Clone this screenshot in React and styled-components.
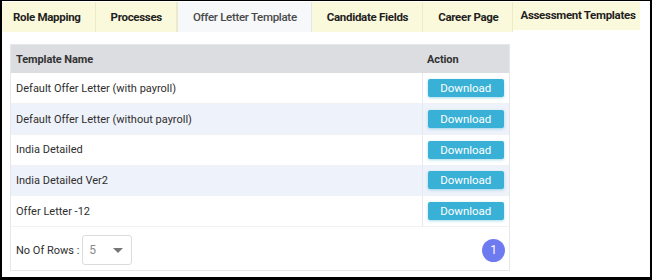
import React from 'react'
import styled, { createGlobalStyle } from 'styled-components'

const Global = createGlobalStyle`
  html, body { margin: 0; padding: 0; background: #fff; }
  body { font-family: Roboto, "Liberation Sans", sans-serif; }
  * { box-sizing: border-box; }
`

const tabs = ['Role Mapping', 'Processes', 'Offer Letter Template', 'Candidate Fields', 'Career Page', 'Assessment Templates']

const templates = [
  'Default Offer Letter (with payroll)',
  'Default Offer Letter (without payroll)',
  'India Detailed',
  'India Detailed Ver2',
  'Offer Letter -12',
]

const App = () => {
  return (
    <Frame>
      <Global />
      <TabBar>
        {tabs.map((t, i) => (
          <Tab key={t} active={i === 2} first={i === 0} last={i === tabs.length - 1}>{t}</Tab>
        ))}
      </TabBar>
      <Content>
        <Panel>
          <Table>
            <thead>
              <tr>
                <Th>Template Name</Th>
                <Th action>Action</Th>
              </tr>
            </thead>
            <tbody>
              {templates.map((name, i) => (
                <Row key={name} striped={i % 2 === 1}>
                  <Td>{name}</Td>
                  <Td action>
                    <DownloadButton>Download</DownloadButton>
                  </Td>
                </Row>
              ))}
            </tbody>
          </Table>
          <Footer>
            <RowsPicker>
              <span>No Of Rows :</span>
              <Select>
                <span>5</span>
                <Caret />
              </Select>
            </RowsPicker>
            <PageDot>1</PageDot>
          </Footer>
        </Panel>
      </Content>
    </Frame>
  )
}

export default App

const Frame = styled.div`
  width: 652px;
  height: 280px;
  border-style: solid;
  border-color: #000;
  border-width: 1px 2px 3px 2px;
  display: flex;
  flex-direction: column;
  overflow: hidden;
`

const TabBar = styled.div`
  display: flex;
  height: 31px;
  margin-top: 1px;
`

const Tab = styled.div`
  height: ${p => (p.last ? '28px' : '30px')};
  padding: ${p => (p.last ? '6px 0 0 7px' : p.first ? '0 14px 0 11px' : '0 14px 0 15px')};
  display: flex;
  align-items: ${p => (p.last ? 'flex-start' : 'center')};
  font-size: 11.5px;
  letter-spacing: -0.3px;
  font-weight: ${p => (p.active ? 500 : 700)};
  color: ${p => (p.active ? '#4a4a4a' : '#1f1f1f')};
  background: ${p => (p.active ? '#f6f8fa' : '#fbf9db')};
  border-right: ${p => (p.last ? 'none' : '1px solid')};
  border-left: ${p => (p.active ? '1px solid #e9ebd6' : 'none')};
  border-right-color: ${p => (p.active ? '#e4e6e8' : '#ecebc4')};
  white-space: nowrap;
  flex: ${p => (p.last ? '1' : 'none')};
  margin-right: ${p => (p.last ? '10px' : '0')};
`

const Content = styled.div`
  padding: 11px 0 0 8px;
`

const Panel = styled.div`
  width: 500px;
  border: 1px solid #e6e7ea;
  background: #fff;
`

const Table = styled.table`
  width: 100%;
  border-collapse: collapse;
  font-size: 11px;
  color: #2e2e2e;
`

const Th = styled.th`
  height: 28px;
  background: #dcdde1;
  text-align: left;
  font-weight: 700;
  padding: 0 5px;
  color: #333;
  letter-spacing: -0.1px;
  width: ${p => (p.action ? '87px' : 'auto')};
`

const Row = styled.tr`
  background: ${p => (p.striped ? '#eef2fa' : '#fff')};
`

const Td = styled.td`
  height: 30.7px;
  padding: 0 5px;
  text-align: ${p => (p.action ? 'center' : 'left')};
  border-left: ${p => (p.action ? '1px solid #e7e9ee' : 'none')};
  border-bottom: 1px solid #f0f1f4;
`

const DownloadButton = styled.button`
  width: 76px;
  height: 18px;
  border: none;
  border-radius: 2px;
  background: #39b0d5;
  color: #fff;
  font-family: Roboto, "Liberation Sans", sans-serif;
  font-size: 11.5px;
  padding: 0;
  box-shadow: 0 1px 3px rgba(57, 176, 213, 0.45);
  display: block;
  margin: 0 auto;
`

const Footer = styled.div`
  height: 43px;
  display: flex;
  align-items: center;
  justify-content: space-between;
  padding: 4px 4px 0 5px;
`

const RowsPicker = styled.div`
  display: flex;
  align-items: center;
  gap: 3px;
  font-size: 11px;
  color: #2e2e2e;
`

const Select = styled.div`
  width: 50px;
  height: 30px;
  border: 1px solid #dcdcdc;
  border-radius: 3px;
  display: flex;
  align-items: center;
  justify-content: space-between;
  padding: 0 8px 0 6px;
  color: #888;
  font-size: 12px;
`

const Caret = styled.span`
  width: 0;
  height: 0;
  border-left: 5px solid transparent;
  border-right: 5px solid transparent;
  border-top: 5px solid #777;
`

const PageDot = styled.div`
  width: 23px;
  height: 23px;
  border-radius: 50%;
  background: #6e7af0;
  color: #fff;
  font-size: 12px;
  display: flex;
  align-items: center;
  justify-content: center;
`
